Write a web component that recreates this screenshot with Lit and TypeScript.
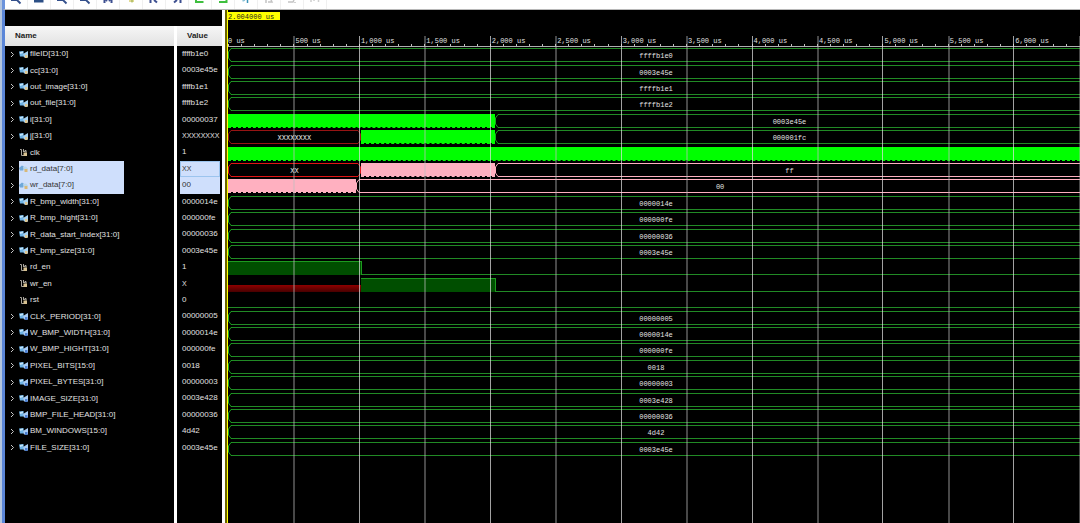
import { LitElement, html, svg, css, nothing } from "lit";
import { customElement } from "lit/decorators.js";
import { classMap } from "lit/directives/class-map.js";
import { styleMap } from "lit/directives/style-map.js";

type Tone = "green" | "red" | "alarm" | "pink";
type Shape = "bus" | "dense" | "high" | "low" | "unknown";

interface Segment {
  shape: Shape;
  from: number;
  to: number;
  tone?: Tone;
  label?: string;
}

interface Signal {
  name: string;
  value: string;
  kind: "bus" | "const" | "wire" | "pinkbus";
  segments: Segment[];
}

/* Visible time span, in microseconds. */
const SPAN = 6510;
const STEP = 500;

const steady = (name: string, value: string, kind: Signal["kind"] = "bus"): Signal => ({
  name,
  value,
  kind,
  segments: [{ shape: "bus", from: 0, to: SPAN, label: value }],
});

const SIGNALS: Signal[] = [
  steady("fileID[31:0]", "ffffb1e0"),
  steady("cc[31:0]", "0003e45e"),
  steady("out_image[31:0]", "ffffb1e1"),
  steady("out_file[31:0]", "ffffb1e2"),
  {
    name: "i[31:0]", value: "00000037", kind: "bus",
    segments: [
      { shape: "dense", from: 0, to: 2040 },
      { shape: "bus", from: 2040, to: SPAN, label: "0003e45e" },
    ],
  },
  {
    name: "j[31:0]", value: "XXXXXXXX", kind: "bus",
    segments: [
      { shape: "bus", from: 0, to: 1015, tone: "red", label: "XXXXXXXX" },
      { shape: "dense", from: 1015, to: 2040 },
      { shape: "bus", from: 2040, to: SPAN, label: "000001fc" },
    ],
  },
  { name: "clk", value: "1", kind: "wire", segments: [{ shape: "dense", from: 0, to: SPAN }] },
  {
    name: "rd_data[7:0]", value: "XX", kind: "pinkbus",
    segments: [
      { shape: "bus", from: 0, to: 1015, tone: "alarm", label: "XX" },
      { shape: "dense", from: 1015, to: 2040, tone: "pink" },
      { shape: "bus", from: 2040, to: SPAN, tone: "pink", label: "ff" },
    ],
  },
  {
    name: "wr_data[7:0]", value: "00", kind: "pinkbus",
    segments: [
      { shape: "dense", from: 0, to: 980, tone: "pink" },
      { shape: "bus", from: 980, to: SPAN, tone: "pink", label: "00" },
    ],
  },
  steady("R_bmp_width[31:0]", "0000014e"),
  steady("R_bmp_hight[31:0]", "000000fe"),
  steady("R_data_start_index[31:0]", "00000036"),
  steady("R_bmp_size[31:0]", "0003e45e"),
  {
    name: "rd_en", value: "1", kind: "wire",
    segments: [
      { shape: "high", from: 0, to: 1025 },
      { shape: "low", from: 1025, to: SPAN },
    ],
  },
  {
    name: "wr_en", value: "X", kind: "wire",
    segments: [
      { shape: "unknown", from: 0, to: 1015 },
      { shape: "high", from: 1015, to: 2045 },
      { shape: "low", from: 2045, to: SPAN },
    ],
  },
  { name: "rst", value: "0", kind: "wire", segments: [{ shape: "low", from: 0, to: SPAN }] },
  steady("CLK_PERIOD[31:0]", "00000005", "const"),
  steady("W_BMP_WIDTH[31:0]", "0000014e", "const"),
  steady("W_BMP_HIGHT[31:0]", "000000fe", "const"),
  steady("PIXEL_BITS[15:0]", "0018", "const"),
  steady("PIXEL_BYTES[31:0]", "00000003", "const"),
  steady("IMAGE_SIZE[31:0]", "0003e428", "const"),
  steady("BMP_FILE_HEAD[31:0]", "00000036", "const"),
  steady("BM_WINDOWS[15:0]", "4d42", "const"),
  steady("FILE_SIZE[31:0]", "0003e45e", "const"),
];

const lens = svg`<path d="M1 0H7L8.500 1.500 10.500 3.500" fill="none" stroke="#34508c" stroke-width="1.800"/>`;

const TOOLS = [
  { label: "Search", art: lens },
  { label: "Save", art: svg`<path d="M1 0H10.500V2.500H1Z" fill="#2c4f86"/>` },
  { label: "Zoom in", art: lens },
  { label: "Zoom out", art: lens },
  { label: "Zoom fit", art: svg`<path d="M2.500 0V3M9.500 0V3M4 1L5 0M8 1L7 0" fill="none" stroke="#3d4f90" stroke-width="2"/>` },
  { label: "Go to cursor", art: svg`<path d="M4 1H9" stroke="#d8d070" stroke-width="1.500"/><path d="M7 0V2.500" stroke="#8fa84a"/>` },
  { label: "Previous transition", art: svg`<path d="M2.500 0V3" stroke="#3d4f90" stroke-width="2"/><path d="M6 0L9 2.500" stroke="#3d4f90" stroke-width="2"/>` },
  { label: "Next transition", art: svg`<path d="M9.500 0V3" stroke="#3d4f90" stroke-width="2"/><path d="M6 0L3 2.500" stroke="#3d4f90" stroke-width="2"/>` },
  { label: "Add marker", art: svg`<path d="M2 0V2H9.500" fill="none" stroke="#3fbf3f" stroke-width="2"/>` },
  { label: "Next marker", art: svg`<path d="M9.500 0V2H2" fill="none" stroke="#3fbf3f" stroke-width="2"/>` },
  { label: "Swap cursors", art: svg`<path d="M2.500 1L5 0" stroke="#8fc4d8" stroke-width="1.500"/><path d="M7.500 0V3" stroke="#3a92b8" stroke-width="1.500"/>` },
  { label: "Previous marker", art: svg`<path d="M3 0V3M5 2H9L8 0" fill="none" stroke="#c4c4c4" stroke-width="1.500"/>` },
  { label: "Last marker", art: svg`<path d="M2 2H7L8 0M9 2V3" fill="none" stroke="#c4c4c4" stroke-width="1.500"/>` },
  { label: "Floating ruler", art: svg`<path d="M2 0V2M5 0V1M9.500 0V2" fill="none" stroke="#d0d0d0" stroke-width="1.500"/>` },
];

const ICONS = {
  bus: svg`<path d="M0 1.500L4.500 1 5 6.500H1Z" fill="#6fb4e6"/><path d="M1 2L4 1.500V3L1 4Z" fill="#c2e4fa"/><path d="M4 4L9 1V7.500H5Z" fill="#a8d2f0"/><path d="M6 5H8.500V8H6Z" fill="#dfc690"/>`,
  const: svg`<path d="M0 1.500L4.500 1 5 6.500H1Z" fill="#6fb4e6"/><path d="M1 2L4 1.500V3L1 4Z" fill="#c2e4fa"/><path d="M4 4L9 1V7.500H5Z" fill="#a8ccf4"/><path d="M6 5H8.500V8H6Z" fill="#4c7ed0"/>`,
  pinkbus: svg`<path d="M0 4L3 1.500 6 3.500 4 6.500H1Z" fill="#6fa8da"/><path d="M4 3L7 2.500 9 4.500 7 7 4.500 6Z" fill="#b7d6ea"/><path d="M5.500 5H8.500V8H5.500Z" fill="#d8b878"/>`,
  wire: svg`<path d="M1 1.500H2.500V7.500H5M4.500 1V4" fill="none" stroke="#a8a49c"/><path d="M5 3.500L7 2.500V4.500" fill="none" stroke="#d8d4c8"/><path d="M4.500 4.500H8V8H4.500Z" fill="#d6c090"/>`,
};

@customElement("app-root")
export class AppRoot extends LitElement {
  static styles = css`
    :host {
      --rows: 410px;
      display: grid;
      grid-template-rows: 9px 1fr;
      height: 100vh;
      overflow: hidden;
      box-sizing: border-box;
      border-left: 2px solid #b4c6df;
      background: #fff;
      font: 8px/16px "Liberation Sans", Arial, sans-serif;
      color: #e0e0e0;
    }
    .toolbar {
      display: flex;
      overflow: hidden;
      border-left: 3px solid #6b93dc;
    }
    .tool {
      display: flex;
      justify-content: center;
      flex: none;
      width: 23px;
      padding: 0;
      border: 0;
      border-right: 1px solid #f0f0f0;
      background: none;
    }
    .tool svg {
      width: 12px;
      height: 9px;
      flex: none;
    }
    .main {
      display: grid;
      grid-template-columns: 217px minmax(0, 1fr);
      column-gap: 5px;
      border-left: 3px solid #5b86d8;
      border-top: 1px solid #b8b8b8;
      min-height: 0;
    }
    .signals {
      display: flex;
      flex-direction: column;
      padding-top: 16px;
      background: #000;
      min-height: 0;
    }
    .table {
      flex: 1;
      display: grid;
      grid-template-columns: 169px 45px;
      grid-template-rows: 20px var(--rows);
      column-gap: 3px;
      background: linear-gradient(90deg, #000 169px, #fff 169px 172px, #000 172px);
    }
    .head {
      display: grid;
      grid-column: 1 / -1;
      grid-template-columns: subgrid;
      background: #fff;
    }
    .head tr,
    .body tr {
      display: grid;
      grid-column: 1 / -1;
      grid-template-columns: subgrid;
      min-height: 0;
    }
    .body {
      display: grid;
      grid-column: 1 / -1;
      grid-template-columns: subgrid;
      grid-template-rows: repeat(25, minmax(0, 1fr));
    }
    th,
    td {
      padding: 0;
      text-align: left;
      min-height: 0;
    }
    .head th {
      padding-left: 10px;
      line-height: 20px;
      color: #222;
      background: linear-gradient(#f6f6f6, #e2e2e2);
    }
    .body th {
      display: flex;
      align-items: stretch;
      font-weight: normal;
    }
    .twist {
      display: flex;
      align-items: center;
      box-sizing: border-box;
      width: 14px;
      padding: 0 0 0 5px;
      border: 0;
      background: none;
    }
    .twist svg {
      width: 5px;
      height: 7px;
    }
    .name {
      display: flex;
      align-items: center;
      gap: 2px;
    }
    .name svg {
      width: 9px;
      height: 9px;
    }
    .value {
      padding: 0 2px 0 3px;
      display: flex;
    }
    .value span {
      flex: 1;
      padding-left: 2px;
    }
    .value .unresolved {
      font-size: 7px;
    }
    .selected .name {
      width: 105px;
      background: #cfdffc;
      color: #333;
    }
    .selected .value span {
      background: #cfdffc;
      color: #333;
    }
    .selected .value span.current {
      box-shadow: inset 0 0 0 1px #9cc4ee;
    }
    .waves {
      position: relative;
      display: grid;
      grid-template-rows: 26px 11px var(--rows) 1fr;
      background: #000;
      border-left: 1px solid #ff0;
      box-shadow: -2px 0 #6b6400;
      font: 7px/8px "Liberation Mono", "Courier New", monospace;
      min-height: 0;
      min-width: 0;
    }
    .cursor {
      padding-top: 2px;
    }
    .cursor span {
      display: block;
      width: 52px;
      height: 8px;
      background: #ff0;
      color: #222;
      line-height: 10px;
    }
    .ruler,
    .lines {
      display: grid;
      grid-template-columns: repeat(13, minmax(0, 500fr)) minmax(0, 10fr);
      overflow: hidden;
    }
    .ruler {
      border-bottom: 1px solid #b0b0b0;
    }
    .mark {
      display: grid;
      grid-template-rows: 8px 2px;
      grid-template-columns: repeat(5, 1fr);
      white-space: pre;
    }
    .mark span {
      grid-column: 1 / -1;
      padding-left: 2px;
      line-height: 10px;
    }
    .first span {
      padding-left: 0;
    }
    .mark i {
      border-left: 1px solid #c0c0c0;
    }
    .lines {
      position: absolute;
      inset: 26px 0 0 0;
      pointer-events: none;
    }
    .line {
      border-left: 2px solid rgba(190, 190, 190, 0.38);
    }
    .line.even {
      border-left: 1px solid rgba(225, 225, 225, 0.72);
    }
    .line.zero {
      border-left: 0;
    }
    .rows {
      display: grid;
      grid-template-rows: repeat(25, minmax(0, 1fr));
    }
    .row {
      display: flex;
      align-items: center;
      min-width: 0;
      overflow: hidden;
    }
    .seg {
      flex: none;
      display: flex;
      height: 14px;
      box-sizing: border-box;
      color: #218a25;
    }
    .red {
      color: #961414;
    }
    .alarm {
      color: #e01414;
    }
    .pink {
      color: #ffb0c0;
    }
    .cap {
      width: 4px;
      height: 14px;
      flex: none;
    }
    .green .cap {
      color: #18a81c;
    }
    .trunk {
      flex: 1;
      border: solid currentColor;
      border-width: 1px 0;
      text-align: center;
      line-height: 14px;
    }
    .trunk span {
      color: #e4e4e4;
    }
    .dense {
      border-bottom: 1px dashed currentColor;
    }
    .dense::before {
      content: "";
      flex: 1;
      background: currentColor;
    }
    .dense.green {
      color: #0f0;
    }
    .high {
      background: #004e00;
      border: solid #1c9a1f;
      border-width: 1px 1px 0 0;
    }
    .low {
      border-bottom: 1px solid #218a25;
    }
    .unknown {
      align-items: flex-end;
    }
    .unknown::before {
      content: "";
      flex: 1;
      height: 7px;
      background: linear-gradient(#900000, #480000);
    }
  `;

  private cap(end: "left" | "right") {
    const d = end === "left" ? "M4 .5H3L.5 4V10L3 13.5H4" : "M0 .5H1L3.500 4V10L1 13.5H0";
    return html`<svg class="cap" viewBox="0 0 4 14" aria-hidden="true">
      <path d=${d} fill="none" stroke="currentColor" />
    </svg>`;
  }

  private segment(s: Segment) {
    const tone = s.tone ?? "green";
    return html`<div
      class=${classMap({ seg: true, [s.shape]: true, [tone]: true })}
      style=${styleMap({ width: `${((s.to - s.from) / SPAN) * 100}%` })}
    >${s.shape === "bus"
      ? html`${this.cap("left")}<div class="trunk"><span>${s.label}</span></div>${s.to < SPAN ? this.cap("right") : nothing}`
      : nothing}</div>`;
  }

  private signalRow(s: Signal) {
    const picked = s.kind === "pinkbus";
    return html`<tr class=${classMap({ selected: picked })}>
      <th scope="row">
        ${s.kind === "wire"
          ? html`<span class="twist"></span>`
          : html`<button class="twist" aria-label="Expand ${s.name}">
              <svg viewBox="0 0 5 7"><path d="M1 1L3.500 3.500 1 6" fill="none" stroke="#c8c8c8" /></svg>
            </button>`}
        <span class="name"><svg viewBox="0 0 9 9" aria-hidden="true">${ICONS[s.kind]}</svg>${s.name}</span>
      </th>
      <td class="value"><span class=${classMap({ current: s.name === "rd_data[7:0]", unresolved: s.value.startsWith("X") })}>${s.value}</span></td>
    </tr>`;
  }

  render() {
    const marks = Array.from({ length: 14 }, (_, i) => i * STEP);
    return html`
      <div class="toolbar" role="toolbar">
        ${TOOLS.map((t) => html`<button class="tool" aria-label=${t.label}><svg viewBox="0 0 12 9">${t.art}</svg></button>`)}
      </div>
      <div class="main">
        <div class="signals">
          <table class="table">
            <thead class="head"><tr><th scope="col">Name</th><th scope="col">Value</th></tr></thead>
            <tbody class="body">${SIGNALS.map((s) => this.signalRow(s))}</tbody>
          </table>
        </div>
        <div class="waves">
          <div class="cursor"><span>2.004000 us</span></div>
          <div class="ruler">
            ${marks.slice(0, 13).map((t) => html`<div class=${classMap({ mark: true, first: t === 0 })}>
              <span>${t.toLocaleString("en-US")} us</span><i></i><i></i><i></i><i></i><i></i>
            </div>`)}
          </div>
          <div class="rows">
            ${SIGNALS.map((s) => html`<div class="row">${s.segments.map((g) => this.segment(g))}</div>`)}
          </div>
          <div class="lines">
            ${marks.map((t) => html`<div class=${classMap({ line: true, even: t % 1000 === 0, zero: t === 0 })}></div>`)}
          </div>
        </div>
      </div>
    `;
  }
}
